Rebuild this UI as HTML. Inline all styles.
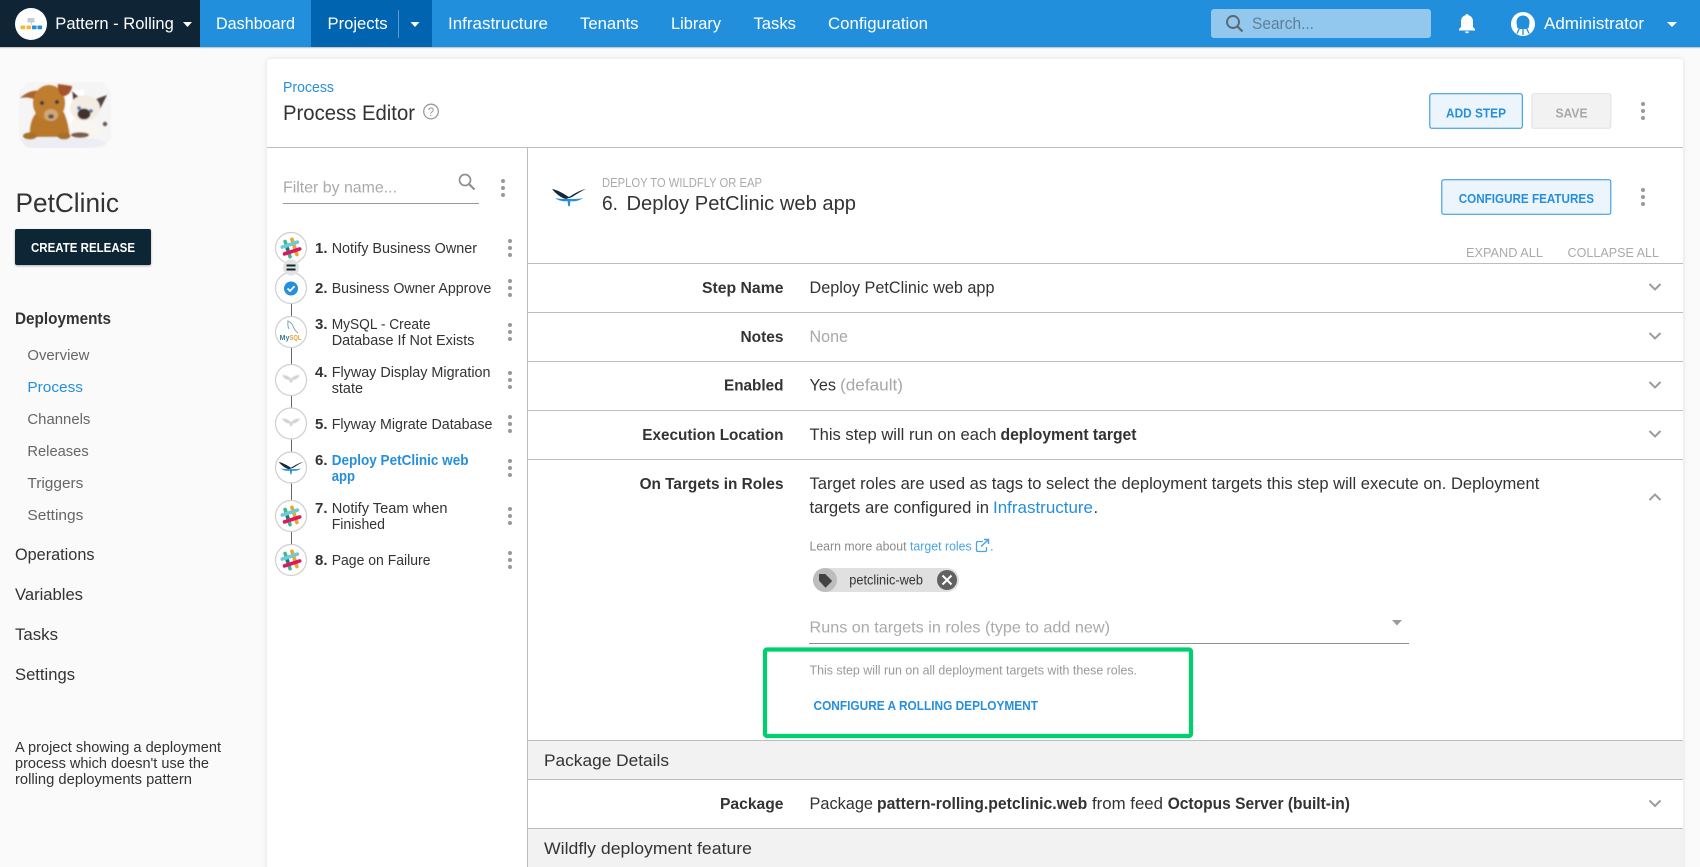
<!DOCTYPE html>
<html><head><meta charset="utf-8"><title>Process Editor</title>
<style>
html,body{margin:0;padding:0;background:#fafafa;width:1700px;height:867px;overflow:hidden}
svg{display:block}
text{font-family:"Liberation Sans",Arial,sans-serif;white-space:pre}
.n{font-size:16.5px;fill:#fff}
.s{font-size:15px;fill:#666}
.h{font-size:16.5px;fill:#333}
.st{font-size:15px;fill:#333}
.b{font-weight:700}
.l{font-size:16px;fill:#333;font-weight:700}
.v{font-size:16.5px;fill:#333}
.g{fill:#a8a8a8}
.bl{fill:#268fdd}
.btn{font-size:13px;font-weight:700;fill:#268fdd}
.d{fill:#999}
.c{fill:none;stroke:#9b9b9b;stroke-width:2}
.line{fill:#bdbdbd}
</style></head>
<body>
<svg width="1700" height="867" viewBox="0 0 1700 867" xmlns="http://www.w3.org/2000/svg">
<defs>
<filter id="sh" x="-2%" y="-2%" width="104%" height="104%"><feDropShadow dx="0" dy="0" stdDeviation="2" flood-color="#000" flood-opacity=".12"/></filter>
<filter id="bs" x="-20%" y="-20%" width="140%" height="140%"><feDropShadow dx="0" dy="1" stdDeviation="1" flood-color="#000" flood-opacity=".3"/></filter>
<filter id="bl1"><feGaussianBlur stdDeviation=".9"/></filter>
<filter id="bl2"><feGaussianBlur stdDeviation=".6"/></filter>
<filter id="bl3"><feGaussianBlur stdDeviation=".3"/></filter>
<clipPath id="pet"><path d="M27 82H103L111 92V138L103 148H27L19 138V92Z"/></clipPath>
<g id="slack" stroke-linecap="round" stroke-width="3.6" fill="none" filter="url(#bl3)">
<g transform="rotate(-18)">
<path d="M-3.6 -8V8" stroke="#3eb991"/>
<path d="M3.6 -8V8" stroke="#e9a820"/>
<path d="M-8 -3.6H8" stroke="#6ecadc"/>
<path d="M-8 3.6H8" stroke="#e01563"/>
<path d="M-3.6 -1.5V1.5" stroke="#1a7a5a" stroke-linecap="butt"/>
</g></g>
<g id="fly">
<path d="M0 1C-5 -2 -11 -6 -17 -7C-14 -3 -8 2 -3 3L0 2C3 2 8 -3 17 -7C11 -6 5 -2 0 1Z" fill="#122a3b"/>
<path d="M-1 3C-5 3 -10 3 -14 2C-10 5 -5 6 -1.5 5L-.8 10L0 10.5L.8 10L1.5 5C5 6 10 5 14 2C10 3 5 3 1 3Z" fill="#268fdd"/>
</g>
<g id="flyg">
<path d="M0 0C-2 -2.500 -5 -4 -9 -4C-8 -2 -6 0 -3 .8L-1.300 .8L-1.300 3.500L1.300 3.500L1.300 .8L3 .8C6 0 8 -2 9 -4C5 -4 2 -2.500 0 0Z" fill="#cfcfcf" filter="url(#bl2)"/>
</g>
<g id="dots"><circle cy="-7" r="2" class="d"/><circle r="2" class="d"/><circle cy="7" r="2" class="d"/></g>
</defs>

<!-- page -->
<rect width="1700" height="867" fill="#fafafa"/>
<rect x="267" y="59" width="1416" height="820" rx="3" fill="#fff" filter="url(#sh)"/>

<!-- top bar -->
<rect width="1700" height="47" fill="#218fdc"/>
<rect width="200" height="47" fill="#0f2535"/>
<rect x="311" width="121" height="47" fill="#0064b0"/>
<rect y="47" width="1700" height="1.2" fill="#c9c9c9"/>
<rect x="398" y="10" width="1" height="28" fill="#5c9bcd"/>
<circle cx="31" cy="24" r="16" fill="#fff"/>
<rect x="27.500" y="18" width="7" height="4.500" rx=".8" fill="#c3ccd4"/>
<rect x="31" y="22" width=".8" height="3" fill="#c3ccd4"/>
<rect x="20.500" y="25.500" width="4.600" height="3.800" rx=".6" fill="#f2b93c"/>
<rect x="26.500" y="25.500" width="4.600" height="3.800" rx=".6" fill="#f2b93c"/>
<rect x="32" y="25.500" width="4.600" height="3.800" rx=".6" fill="#268fdd"/>
<rect x="37.500" y="25.500" width="4.600" height="3.800" rx=".6" fill="#268fdd"/>
<text class="n" x="55.300" y="29" textLength="118.500" lengthAdjust="spacingAndGlyphs">Pattern - Rolling</text>
<path d="M183 22H192L187.500 27Z" fill="#fff"/>
<text class="n" x="216" y="29" textLength="79" lengthAdjust="spacingAndGlyphs">Dashboard</text>
<text class="n" x="327.500" y="29" textLength="60" lengthAdjust="spacingAndGlyphs">Projects</text>
<path d="M410.500 22H419.500L415 27Z" fill="#fff"/>
<text class="n" x="448" y="29" textLength="100" lengthAdjust="spacingAndGlyphs">Infrastructure</text>
<text class="n" x="580" y="29" textLength="58.500" lengthAdjust="spacingAndGlyphs">Tenants</text>
<text class="n" x="671" y="29" textLength="50" lengthAdjust="spacingAndGlyphs">Library</text>
<text class="n" x="753.500" y="29" textLength="42.500" lengthAdjust="spacingAndGlyphs">Tasks</text>
<text class="n" x="828" y="29" textLength="100" lengthAdjust="spacingAndGlyphs">Configuration</text>
<rect x="1211" y="9" width="220" height="29" rx="3" fill="#93c8ee"/>
<circle cx="1233" cy="22" r="6" fill="none" stroke="#5b6770" stroke-width="1.900"/>
<path d="M1237.500 26.500L1242.500 31.500" stroke="#5b6770" stroke-width="2.200"/>
<text x="1252" y="29" font-size="16.500" fill="#5f7f96" textLength="62" lengthAdjust="spacingAndGlyphs">Search...</text>
<path d="M1459 30.500V29L1461 27V21.500C1461 18 1463 16 1465.500 15.300V15C1465.500 13.800 1468.500 13.800 1468.500 15V15.300C1471 16 1473 18 1473 21.500V27L1475 29V30.500Z" fill="#fff"/>
<path d="M1465 31.500H1469C1469 33.800 1465 33.800 1465 31.500Z" fill="#fff"/>
<circle cx="1523" cy="24" r="12" fill="#fff"/>
<path d="M1523 15.500C1527 15.500 1529.500 18.500 1529.500 22C1529.500 25 1528.500 26 1529 27.500L1526 29H1520L1517 27.500C1517.500 26 1516.500 25 1516.500 22C1516.500 18.500 1519 15.500 1523 15.500Z" fill="#218fdc"/>
<path d="M1519.500 28L1517 33.500M1523 28.500V35M1526.500 28L1529 33.500" stroke="#218fdc" stroke-width="1.300" fill="none"/>
<text class="n" x="1544" y="29" textLength="100" lengthAdjust="spacingAndGlyphs">Administrator</text>
<path d="M1667 22H1677L1672 27Z" fill="#fff"/>

<!-- left sidebar -->
<g clip-path="url(#pet)">
<rect x="19" y="82" width="92" height="66" fill="#f5f5f6"/>
<g filter="url(#bl1)">
<ellipse cx="60" cy="143" rx="46" ry="6" fill="#eceef3"/>
<rect x="66" y="90" width="18" height="48" fill="#fff"/>
<path d="M68 138C68 124 72 116 84 116C94 116 100 124 99 134L96 138Z" fill="#f9f5f0"/>
<path d="M72 91L84 101L74 108Z" fill="#4f3a33"/>
<path d="M107 95L99 111L88 102Z" fill="#54403a"/>
<ellipse cx="85" cy="108" rx="15" ry="13" fill="#f4ece3"/>
<ellipse cx="84" cy="114" rx="6.500" ry="5.500" fill="#43332f"/>
<circle cx="79" cy="108" r="1.900" fill="#4a76a5"/>
<circle cx="91" cy="111" r="1.900" fill="#4a76a5"/>
<circle cx="105" cy="124" r="2.200" fill="#6a5545"/>
<ellipse cx="80" cy="135" rx="9" ry="2.800" fill="#7b5c47"/>
<path d="M30 137C29 124 33 114 40 110L62 110C68 118 69 130 70 137Z" fill="#b9772a"/>
<path d="M20 98C26 93 32 90 39 91L40 102C32 97 26 97 20 98Z" fill="#a8642e"/>
<ellipse cx="49" cy="103" rx="16" ry="18" fill="#bf7d2e"/>
<path d="M58 84L72 86C72 92 68 96 64 96C60 96 57 90 58 84Z" fill="#a4532a"/>
<ellipse cx="51" cy="115" rx="7" ry="6" fill="#cfa878"/>
<ellipse cx="51" cy="116.500" rx="3" ry="2.200" fill="#5a5654"/>
<circle cx="42" cy="103" r="2" fill="#2f3a46"/>
<circle cx="57" cy="102" r="2" fill="#2f3a46"/>
<ellipse cx="30" cy="136" rx="7" ry="3.500" fill="#a87026"/>
<ellipse cx="64" cy="136" rx="6.500" ry="3.500" fill="#a87026"/>
</g></g>
<text x="15.500" y="212" font-size="27px" fill="#333" textLength="103.500" lengthAdjust="spacingAndGlyphs">PetClinic</text>
<rect x="15" y="229" width="136" height="36" rx="2" fill="#0f2535" filter="url(#bs)"/>
<text x="31" y="252" font-size="13px" font-weight="700" fill="#fff" textLength="104" lengthAdjust="spacingAndGlyphs">CREATE RELEASE</text>
<text class="h b" x="15" y="324" textLength="96" lengthAdjust="spacingAndGlyphs">Deployments</text>
<text class="s" x="27.400" y="360" textLength="62" lengthAdjust="spacingAndGlyphs">Overview</text>
<text class="s" style="fill:#268fdd" x="27.400" y="392" textLength="55.600" lengthAdjust="spacingAndGlyphs">Process</text>
<text class="s" x="27.400" y="424" textLength="63" lengthAdjust="spacingAndGlyphs">Channels</text>
<text class="s" x="27.400" y="456" textLength="61.300" lengthAdjust="spacingAndGlyphs">Releases</text>
<text class="s" x="27.400" y="488" textLength="56" lengthAdjust="spacingAndGlyphs">Triggers</text>
<text class="s" x="27.400" y="520" textLength="56" lengthAdjust="spacingAndGlyphs">Settings</text>
<text class="h" x="15" y="560" textLength="79.500" lengthAdjust="spacingAndGlyphs">Operations</text>
<text class="h" x="15" y="600" textLength="68" lengthAdjust="spacingAndGlyphs">Variables</text>
<text class="h" x="15" y="640" textLength="43" lengthAdjust="spacingAndGlyphs">Tasks</text>
<text class="h" x="15" y="680" textLength="60" lengthAdjust="spacingAndGlyphs">Settings</text>
<text x="15" y="752" font-size="14.300" fill="#333" textLength="206" lengthAdjust="spacingAndGlyphs">A project showing a deployment</text>
<text x="15" y="768" font-size="14.300" fill="#333" textLength="194" lengthAdjust="spacingAndGlyphs">process which doesn't use the</text>
<text x="15" y="784" font-size="14.300" fill="#333" textLength="177" lengthAdjust="spacingAndGlyphs">rolling deployments pattern</text>

<!-- card head -->
<text class="bl" x="283" y="92" font-size="14.500" textLength="51" lengthAdjust="spacingAndGlyphs">Process</text>
<text x="283" y="120" font-size="21px" fill="#333" textLength="132" lengthAdjust="spacingAndGlyphs">Process Editor</text>
<circle cx="431" cy="111.500" r="7.300" fill="none" stroke="#9a9a9a" stroke-width="1.300"/>
<text x="427.800" y="116" font-size="11.500" fill="#9a9a9a">?</text>
<rect x="1429.800" y="93.800" width="92.500" height="34.500" rx="2" fill="#ecf5fc" stroke="#268fdd" stroke-width="1"/>
<text class="btn" x="1446" y="117.500" textLength="60" lengthAdjust="spacingAndGlyphs">ADD STEP</text>
<rect x="1531.800" y="93.800" width="79" height="34.500" rx="2" fill="#f2f2f2" stroke="#e0e0e0" stroke-width="1"/>
<text x="1555.500" y="117.500" font-size="13px" font-weight="700" fill="#a8a8a8" textLength="32" lengthAdjust="spacingAndGlyphs">SAVE</text>
<use href="#dots" x="1643" y="111"/>
<rect class="line" x="267" y="147" width="1416" height="1"/>
<rect class="line" x="527" y="147" width="1" height="720"/>

<!-- filter -->
<text x="283" y="192.500" font-size="16px" fill="#aaa" textLength="114" lengthAdjust="spacingAndGlyphs">Filter by name...</text>
<rect x="283" y="203" width="196" height="1" fill="#999"/>
<circle cx="465" cy="180" r="5.500" fill="none" stroke="#8f8f8f" stroke-width="1.700"/>
<path d="M469 184L474.500 189.500" stroke="#8f8f8f" stroke-width="2.100"/>
<use href="#dots" x="503" y="188"/>

<!-- steps -->
<rect x="291" y="288" width="1" height="272" fill="#666"/>
<g fill="#fff" stroke="#cfcfcf" stroke-width="1.200">
<circle cx="291" cy="248" r="15.500"/><circle cx="291" cy="288" r="15.500"/><circle cx="291" cy="332" r="15.500"/><circle cx="291" cy="380" r="15.500"/>
<circle cx="291" cy="423.500" r="15.500"/><circle cx="291" cy="467.500" r="15.500"/><circle cx="291" cy="516" r="15.500"/><circle cx="291" cy="560" r="15.500"/>
</g>
<use href="#slack" x="291" y="248"/><use href="#slack" x="291" y="516"/><use href="#slack" x="291" y="560"/>
<circle cx="291" cy="267.500" r="8" fill="#e2e2e2"/>
<rect x="286.500" y="264.500" width="9" height="2" fill="#0f2535"/><rect x="286.500" y="268.500" width="9" height="2" fill="#0f2535"/>
<circle cx="291" cy="288.500" r="7" fill="#268fdd"/>
<path d="M287.500 288.500L290 291L294.500 286.300" fill="none" stroke="#fff" stroke-width="1.800"/>
<path d="M287 321C289 321 292 323 293 326C294 329 295 331 298 333M288 322C287.500 325 288 327 289 329" fill="none" stroke="#7fa3b5" stroke-width="1"/>
<text x="279.500" y="340" font-size="7px" font-weight="700" fill="#3a7b95" textLength="10" lengthAdjust="spacingAndGlyphs">My</text>
<text x="289.500" y="340" font-size="7px" font-weight="700" fill="#e4a63c" textLength="12" lengthAdjust="spacingAndGlyphs">SQL</text>
<use href="#flyg" x="291" y="379"/><use href="#flyg" x="291" y="422.500"/>
<use href="#fly" transform="translate(291 467) scale(.72)"/>

<text class="st b" x="315" y="253">1.</text><text class="st b" x="315" y="293">2.</text><text class="st b" x="315" y="329">3.</text><text class="st b" x="315" y="377">4.</text>
<text class="st b" x="315" y="429">5.</text><text class="st b" x="315" y="465">6.</text><text class="st b" x="315" y="513">7.</text><text class="st b" x="315" y="565">8.</text>
<text class="st" x="331.700" y="253" textLength="145.300" lengthAdjust="spacingAndGlyphs">Notify Business Owner</text>
<text class="st" x="331.700" y="293" textLength="159.600" lengthAdjust="spacingAndGlyphs">Business Owner Approve</text>
<text class="st" x="331.700" y="329" textLength="98.800" lengthAdjust="spacingAndGlyphs">MySQL - Create</text>
<text class="st" x="331.700" y="345" textLength="142.800" lengthAdjust="spacingAndGlyphs">Database If Not Exists</text>
<text class="st" x="331.700" y="377" textLength="158.800" lengthAdjust="spacingAndGlyphs">Flyway Display Migration</text>
<text class="st" x="331.700" y="393" textLength="31.300" lengthAdjust="spacingAndGlyphs">state</text>
<text class="st" x="331.700" y="429" textLength="160.800" lengthAdjust="spacingAndGlyphs">Flyway Migrate Database</text>
<text class="st b" style="fill:#268fdd" x="331.700" y="465" textLength="136.800" lengthAdjust="spacingAndGlyphs">Deploy PetClinic web</text>
<text class="st b" style="fill:#268fdd" x="331.700" y="481" textLength="23.300" lengthAdjust="spacingAndGlyphs">app</text>
<text class="st" x="331.700" y="513" textLength="115.800" lengthAdjust="spacingAndGlyphs">Notify Team when</text>
<text class="st" x="331.700" y="529" textLength="53.300" lengthAdjust="spacingAndGlyphs">Finished</text>
<text class="st" x="331.700" y="565" textLength="98.800" lengthAdjust="spacingAndGlyphs">Page on Failure</text>
<use href="#dots" x="510" y="248"/><use href="#dots" x="510" y="288"/><use href="#dots" x="510" y="332"/><use href="#dots" x="510" y="380"/>
<use href="#dots" x="510" y="424"/><use href="#dots" x="510" y="468"/><use href="#dots" x="510" y="516"/><use href="#dots" x="510" y="560"/>

<!-- step head -->
<use href="#fly" x="569" y="196"/>
<text x="602" y="187" font-size="13px" fill="#aaa" textLength="160" lengthAdjust="spacingAndGlyphs">DEPLOY TO WILDFLY OR EAP</text>
<text x="602" y="210" font-size="20px" fill="#333" textLength="16" lengthAdjust="spacingAndGlyphs">6.</text>
<text x="626.500" y="210" font-size="20px" fill="#333" textLength="229.500" lengthAdjust="spacingAndGlyphs">Deploy PetClinic web app</text>
<rect x="1441.800" y="179.800" width="169" height="34.500" rx="2" fill="#ecf5fc" stroke="#268fdd" stroke-width="1"/>
<text class="btn" x="1458.700" y="203" textLength="135.300" lengthAdjust="spacingAndGlyphs">CONFIGURE FEATURES</text>
<use href="#dots" x="1643" y="197"/>
<text x="1466" y="257" font-size="13px" fill="#aaa" textLength="77" lengthAdjust="spacingAndGlyphs">EXPAND ALL</text>
<text x="1567.500" y="257" font-size="13px" fill="#aaa" textLength="91.500" lengthAdjust="spacingAndGlyphs">COLLAPSE ALL</text>

<!-- rows -->
<rect x="528" y="740" width="1155" height="40" fill="#f2f2f2"/>
<rect x="528" y="828" width="1155" height="39" fill="#f2f2f2"/>
<rect class="line" x="528" y="263" width="1155" height="1"/>
<rect class="line" x="528" y="312" width="1155" height="1"/>
<rect class="line" x="528" y="361" width="1155" height="1"/>
<rect class="line" x="528" y="410" width="1155" height="1"/>
<rect class="line" x="528" y="459" width="1155" height="1"/>
<rect class="line" x="528" y="740" width="1155" height="1"/>
<rect class="line" x="528" y="779" width="1155" height="1"/>
<rect class="line" x="528" y="828" width="1155" height="1"/>

<text class="l" x="702" y="293" textLength="81.500" lengthAdjust="spacingAndGlyphs">Step Name</text>
<text class="v" x="809.500" y="293" textLength="185" lengthAdjust="spacingAndGlyphs">Deploy PetClinic web app</text>
<text class="l" x="740.500" y="342" textLength="43" lengthAdjust="spacingAndGlyphs">Notes</text>
<text class="v g" x="809.500" y="342" textLength="38.500" lengthAdjust="spacingAndGlyphs">None</text>
<text class="l" x="724" y="390.500" textLength="59.500" lengthAdjust="spacingAndGlyphs">Enabled</text>
<text class="v" x="809.500" y="390.500" textLength="26.500" lengthAdjust="spacingAndGlyphs">Yes</text>
<text class="v g" x="840" y="390.500" textLength="63" lengthAdjust="spacingAndGlyphs">(default)</text>
<text class="l" x="642.300" y="440" textLength="141.200" lengthAdjust="spacingAndGlyphs">Execution Location</text>
<text class="v" x="809.500" y="440" textLength="187" lengthAdjust="spacingAndGlyphs">This step will run on each</text>
<text class="v b" x="1000.500" y="440" textLength="136" lengthAdjust="spacingAndGlyphs">deployment target</text>
<text class="l" x="639.600" y="489" textLength="143.900" lengthAdjust="spacingAndGlyphs">On Targets in Roles</text>
<text class="v" x="809.500" y="489" textLength="729.800" lengthAdjust="spacingAndGlyphs">Target roles are used as tags to select the deployment targets this step will execute on. Deployment</text>
<text class="v" x="809.500" y="513" textLength="179.500" lengthAdjust="spacingAndGlyphs">targets are configured in</text>
<text class="v bl" x="993" y="513" textLength="100" lengthAdjust="spacingAndGlyphs">Infrastructure</text>
<text class="v" x="1093.500" y="513">.</text>
<text x="809.500" y="550.500" font-size="13px" fill="#8a8a8a" textLength="97" lengthAdjust="spacingAndGlyphs">Learn more about</text>
<text class="bl" x="910" y="550.500" font-size="13px" style="fill:#4aa3e4" textLength="61.700" lengthAdjust="spacingAndGlyphs">target roles</text>
<path d="M983 541.500H978C977 541.500 976.500 542 976.500 543V550C976.500 551 977 551.500 978 551.500H985C986 551.500 986.500 551 986.500 550V547" fill="none" stroke="#4aa3e4" stroke-width="1.300"/>
<path d="M981 546.500L988 540M984 539.500H988.500V544" fill="none" stroke="#4aa3e4" stroke-width="1.500"/>
<text x="990" y="550.500" font-size="13px" fill="#8a8a8a">.</text>

<rect x="813" y="568" width="146" height="24" rx="12" fill="#e0e0e0"/>
<circle cx="825" cy="580" r="12" fill="#bdbdbd"/>
<path d="M819.500 574.500H825L831.500 581L825.500 587L819.500 580.500Z" fill="#424242" stroke="#424242" stroke-width="1" stroke-linejoin="round"/>
<text x="849.300" y="584.500" font-size="13.500" fill="#333" textLength="73.700" lengthAdjust="spacingAndGlyphs">petclinic-web</text>
<circle cx="947" cy="580" r="10" fill="#616161"/>
<path d="M942.500 575.500L951.500 584.500M951.500 575.500L942.500 584.500" stroke="#fff" stroke-width="2"/>
<text x="809.500" y="632.500" font-size="16px" fill="#aaa" textLength="300.500" lengthAdjust="spacingAndGlyphs">Runs on targets in roles (type to add new)</text>
<rect x="809" y="643" width="600" height="1" fill="#8f8f8f"/>
<path d="M1392 620H1402L1397 625.500Z" fill="#9b9b9b"/>

<rect x="765" y="649.500" width="426" height="86.500" rx="2" fill="none" stroke="#00cf6f" stroke-width="4.200"/>
<text x="809.500" y="674.500" font-size="13px" fill="#999" textLength="327.500" lengthAdjust="spacingAndGlyphs">This step will run on all deployment targets with these roles.</text>
<text class="btn" x="813.500" y="710" textLength="224.500" lengthAdjust="spacingAndGlyphs">CONFIGURE A ROLLING DEPLOYMENT</text>

<text class="v" x="544" y="766" textLength="125" lengthAdjust="spacingAndGlyphs">Package Details</text>
<text class="l" x="720" y="809" textLength="63.500" lengthAdjust="spacingAndGlyphs">Package</text>
<text class="v" x="809.500" y="809" textLength="63.500" lengthAdjust="spacingAndGlyphs">Package</text>
<text class="v b" x="877" y="809" textLength="210.300" lengthAdjust="spacingAndGlyphs">pattern-rolling.petclinic.web</text>
<text class="v" x="1092" y="809" textLength="71" lengthAdjust="spacingAndGlyphs">from feed</text>
<text class="v b" x="1167.700" y="809" textLength="182.300" lengthAdjust="spacingAndGlyphs">Octopus Server (built-in)</text>
<text class="v" x="544" y="854" textLength="208" lengthAdjust="spacingAndGlyphs">Wildfly deployment feature</text>

<path class="c" d="M1649.500 284L1655 289.500L1660.500 284"/>
<path class="c" d="M1649.500 333L1655 338.500L1660.500 333"/>
<path class="c" d="M1649.500 382L1655 387.500L1660.500 382"/>
<path class="c" d="M1649.500 431L1655 436.500L1660.500 431"/>
<path class="c" d="M1649.500 500L1655 494.500L1660.500 500"/>
<path class="c" d="M1649.500 800.500L1655 806L1660.500 800.500"/>
</svg>
</body></html>
